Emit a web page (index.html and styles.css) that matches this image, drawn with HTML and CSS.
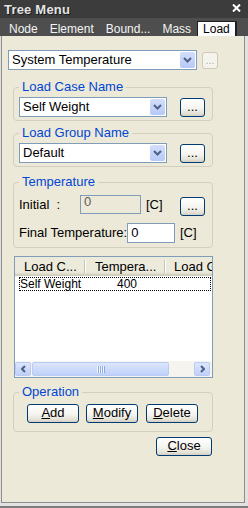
FILE: index.html
```html
<!DOCTYPE html>
<html lang="en">
<head>
    <meta charset="UTF-8">
    <title>Tree Menu</title>
    <link rel="stylesheet" href="styles.css">
</head>
<body>
    <div class="window">
        <div class="titlebar">
            <span class="title">Tree Menu</span>
            <svg class="close-x" width="9" height="8" viewBox="0 0 9 8">
                <path d="M1 0.5 L8 7.5 M8 0.5 L1 7.5" stroke="#fff" stroke-width="2"/>
            </svg>
        </div>

        <div class="tabs">
            <span class="tab">Node</span>
            <span class="tab">Element</span>
            <span class="tab">Bound...</span>
            <span class="tab">Mass</span>
            <span class="tab active">Load</span>
        </div>

        <div class="panel">
            <div class="top-row">
                <div class="combo wide">
                    <span class="combo-text">System Temperature</span>
                    <span class="combo-btn"><svg width="9" height="6" viewBox="0 0 9 6"><path d="M1 1 L4.5 4.5 L8 1" fill="none" stroke="#4d6185" stroke-width="2"/></svg></span>
                </div>
                <button class="btn dots disabled">...</button>
            </div>

            <fieldset class="group g-case">
                <legend>Load Case Name</legend>
                <div class="row">
                    <div class="combo">
                        <span class="combo-text">Self Weight</span>
                        <span class="combo-btn"><svg width="9" height="6" viewBox="0 0 9 6"><path d="M1 1 L4.5 4.5 L8 1" fill="none" stroke="#4d6185" stroke-width="2"/></svg></span>
                    </div>
                    <button class="btn dots">...</button>
                </div>
            </fieldset>

            <fieldset class="group g-group">
                <legend>Load Group Name</legend>
                <div class="row">
                    <div class="combo">
                        <span class="combo-text">Default</span>
                        <span class="combo-btn"><svg width="9" height="6" viewBox="0 0 9 6"><path d="M1 1 L4.5 4.5 L8 1" fill="none" stroke="#4d6185" stroke-width="2"/></svg></span>
                    </div>
                    <button class="btn dots">...</button>
                </div>
            </fieldset>

            <fieldset class="group g-temp">
                <legend>Temperature</legend>
                <div class="trow">
                    <span class="tlabel initial">Initial  :</span>
                    <span class="field off">0</span>
                    <span class="unit">[C]</span>
                    <button class="btn dots low">...</button>
                </div>
                <div class="trow second">
                    <span class="tlabel final">Final Temperature:</span>
                    <span class="field on">0</span>
                    <span class="unit">[C]</span>
                </div>
            </fieldset>

            <div class="list">
                <div class="list-head">
                    <span class="hcol c1">Load C...</span>
                    <span class="sep"></span>
                    <span class="hcol c2">Tempera...</span>
                    <span class="sep"></span>
                    <span class="hcol c3">Load G</span>
                </div>
                <div class="lrow">
                    <span class="cell c1">Self Weight</span>
                    <span class="cell c2">400</span>
                </div>
                <div class="hscroll">
                    <span class="sbtn"><svg width="5" height="8" viewBox="0 0 5 8"><path d="M4 1 L1 4 L4 7" fill="none" stroke="#4d6185" stroke-width="2"/></svg></span>
                    <span class="thumb"><span class="grip"></span></span>
                    <span class="sbtn right"><svg width="5" height="8" viewBox="0 0 5 8"><path d="M1 1 L4 4 L1 7" fill="none" stroke="#4d6185" stroke-width="2"/></svg></span>
                </div>
            </div>

            <fieldset class="group g-ops">
                <legend>Operation</legend>
                <div class="row">
                    <button class="btn op add"><u>A</u>dd</button>
                    <button class="btn op modify"><u>M</u>odify</button>
                    <button class="btn op delete"><u>D</u>elete</button>
                </div>
            </fieldset>

            <div class="close-row">
                <button class="btn op close"><u>C</u>lose</button>
            </div>
        </div>
    </div>
</body>
</html>
```

FILE: styles.css
```css
body {
    margin: 0;
    font-family: "Liberation Sans", Arial, sans-serif;
    font-size: 13px;
    color: #000;
    background: #dedede;
}
.window {
    width: 248px;
    height: 508px;
    box-sizing: border-box;
    display: flex;
    flex-direction: column;
    background: #e2e2e2;
    border-bottom: 2px solid #7b7b7b;
}
.titlebar {
    height: 18px;
    flex-shrink: 0;
    display: flex;
    align-items: center;
    justify-content: space-between;
    padding: 0 7px 0 4px;
    background: #3c3c3c;
}
.title {
    color: #e4e4e4;
    font-weight: bold;
    font-size: 13px;
    letter-spacing: 0.2px;
    text-shadow: 1px 1px 0 #1a1a1a;
}
.close-x {
    margin-top: -2px;
}
.tabs {
    height: 18px;
    flex-shrink: 0;
    box-sizing: border-box;
    display: flex;
    align-items: flex-end;
    padding-left: 3px;
    background: #4e4e4e;
}
.tab {
    height: 14px;
    line-height: 14px;
    padding: 0 6px;
    font-size: 12px;
    color: #f4f4f4;
}
.tab.active {
    box-sizing: border-box;
    height: 15px;
    padding: 0 5px;
    background: #fdfdfd;
    color: #000;
    border: 1px solid #1e1e1e;
    border-right-width: 2px;
    border-bottom: none;
}
.panel {
    flex: 1;
    margin: 0 3px 3px 1px;
    padding: 14px 0 0 6px;
    background: #ece9d8;
    border: 1px solid #8c8c8c;
    border-top: none;
}
.top-row,
.row {
    display: flex;
    align-items: center;
}
.combo {
    width: 148px;
    height: 20px;
    box-sizing: border-box;
    display: flex;
    border: 1px solid #7f9db9;
    background: #fff;
}
.combo.wide {
    width: 189px;
}
.combo-text {
    flex: 1;
    padding-left: 3px;
    line-height: 18px;
    white-space: nowrap;
}
.combo-btn {
    width: 15px;
    margin: 1px;
    display: flex;
    align-items: center;
    justify-content: center;
    border-radius: 2px;
    background: linear-gradient(#d3defc, #b6c9f6);
}
.btn {
    box-sizing: border-box;
    padding: 0 0 2px;
    font-family: "Liberation Sans", Arial, sans-serif;
    font-size: 13px;
    line-height: 15px;
    color: #000;
    border: 1px solid #003c74;
    border-radius: 3px;
    background: linear-gradient(#ffffff 0%, #f5f4ef 55%, #e4e1d6 85%, #d4cfc2 100%);
}
.dots {
    width: 25px;
    height: 19px;
    margin-left: 13px;
}
.dots.disabled {
    width: 16px;
    height: 17px;
    margin-left: 5px;
    font-size: 11px;
    color: #b4b1a2;
    border-color: #cdcabb;
    background: #f4f3ec;
}
.group {
    width: 200px;
    box-sizing: border-box;
    min-width: 0;
    margin: 11px 0 0 5px;
    padding: 4px 5px 3px;
    border: 1px solid #d2cfbf;
    border-radius: 4px;
}
.group legend {
    padding: 0 3px;
    font-size: 13px;
    line-height: 12px;
    color: #0046d5;
}
.g-group {
    margin-top: 6px;
}
.g-temp {
    margin-top: 9px;
    padding: 7px 5px 4px;
}
.trow {
    display: flex;
    align-items: flex-start;
    line-height: 19px;
}
.trow.second {
    margin-top: 7px;
    line-height: 20px;
}
.tlabel {
    white-space: pre;
}
.tlabel.initial {
    width: 61px;
}
.tlabel.final {
    width: 113px;
}
.field {
    box-sizing: border-box;
    border: 1px solid #7f9db9;
    padding-left: 3px;
}
.field.off {
    width: 61px;
    height: 19px;
    line-height: 12px;
    color: #5c5c5c;
    background: #ece9d8;
}
.field.on {
    width: 51px;
    height: 20px;
    line-height: 18px;
    background: #fff;
}
.unit {
    margin-left: 5px;
    width: 29px;
}
.dots.low {
    margin: 2px 0 0 5px;
}
.list {
    width: 199px;
    height: 122px;
    box-sizing: border-box;
    margin: 8px 0 0 6px;
    display: flex;
    flex-direction: column;
    overflow: hidden;
    border: 1px solid #7f9db9;
    background: #fff;
}
.list-head {
    height: 19px;
    flex-shrink: 0;
    display: flex;
    white-space: nowrap;
    background: linear-gradient(#ebeadb 0%, #ebeadb 80%, #e3e0cf 85%, #d8d4c4 92%, #cbc7b6 100%);
}
.hcol {
    flex-shrink: 0;
    line-height: 19px;
}
.hcol.c1 {
    width: 60px;
    padding-left: 9px;
}
.hcol.c2 {
    width: 69px;
    padding-left: 10px;
}
.hcol.c3 {
    padding-left: 9px;
}
.sep {
    flex-shrink: 0;
    width: 1px;
    height: 13px;
    margin-top: 3px;
    background: #c7c4b4;
    box-shadow: 1px 0 0 #fff;
}
.lrow {
    width: 192px;
    height: 14px;
    box-sizing: border-box;
    margin: 1px 0 0 4px;
    display: flex;
    font-size: 12px;
    line-height: 12px;
    border: 1px dotted #000;
}
.cell.c1 {
    width: 64px;
}
.cell.c2 {
    padding-left: 33px;
}
.hscroll {
    margin-top: auto;
    height: 16px;
    box-sizing: border-box;
    display: flex;
    padding: 1px 2px 1px 0;
    background: #f5f4ee;
}
.sbtn,
.thumb {
    box-sizing: border-box;
    display: flex;
    align-items: center;
    justify-content: center;
    border: 1px solid #b9cbf5;
    border-radius: 2px;
    background: linear-gradient(#dce6fd, #bfd0f8);
}
.sbtn {
    width: 16px;
}
.sbtn.right {
    margin-left: auto;
}
.thumb {
    width: 137px;
    margin-left: 1px;
}
.grip {
    width: 8px;
    height: 7px;
    background: repeating-linear-gradient(90deg, #f2f6ff 0 1px, #8ea8e2 1px 2px);
}
.g-ops {
    margin-top: 8px;
    padding: 6px 5px 8px;
}
.op {
    width: 52px;
    height: 19px;
}
.op.add {
    margin-left: 8px;
}
.op.modify {
    margin-left: 7px;
}
.op.delete {
    margin-left: 8px;
}
.close-row {
    width: 200px;
    margin: 5px 0 0 5px;
    display: flex;
    justify-content: flex-end;
}
.op.close {
    width: 56px;
    margin-right: 1px;
}
```
